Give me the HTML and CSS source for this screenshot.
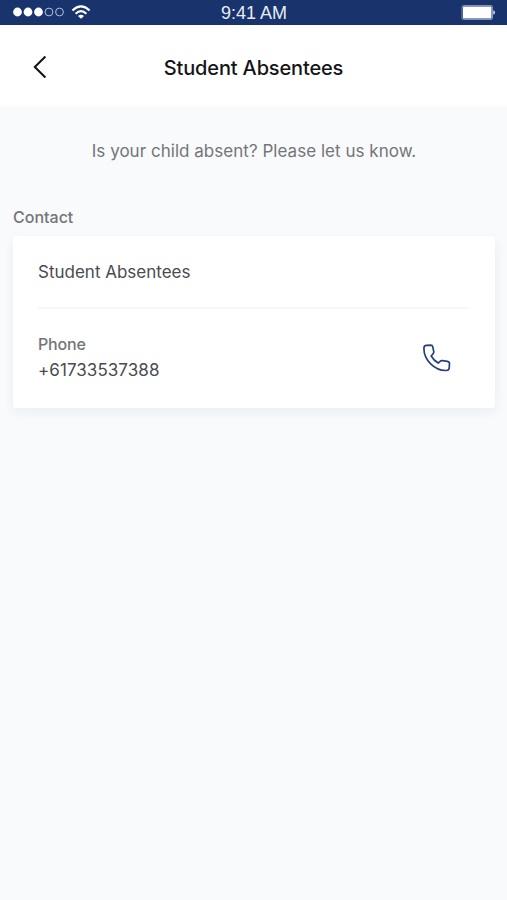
FILE: index.html
```html
<!DOCTYPE html>
<html lang="en">
<head>
<meta charset="utf-8">
<title>Student Absentees</title>
<link rel="stylesheet" href="styles.css">
</head>
<body>
<div class="status">
  <div class="status-left">
    <svg class="signal" viewBox="0 0 52 10" aria-hidden="true">
      <g fill="#fff"><circle cx="4.5" cy="5" r="4.4"/><circle cx="15" cy="5" r="4.4"/><circle cx="25.5" cy="5" r="4.4"/></g>
      <g fill="none" stroke="#b4c0dc" stroke-width="1"><circle cx="36" cy="5" r="3.9"/><circle cx="46.5" cy="5" r="3.9"/></g>
    </svg>
    <svg class="wifi" viewBox="0 0 20 14" aria-hidden="true">
      <g fill="none" stroke="#fff" stroke-width="2.1"><path d="M1.4 5.4Q10-2.6 18.6 5.4"/><path d="M4.6 8.8Q10 3.6 15.4 8.8"/></g>
      <path d="M7 11Q10 8.4 13 11L10 13.8Z" fill="#fff"/>
    </svg>
  </div>
  <span class="time">9:41 AM</span>
  <svg class="battery" viewBox="0 0 34 15" aria-hidden="true">
    <rect x="1" y=".5" width="30.5" height="14" rx="1.5" fill="none" stroke="#8292ba"/>
    <rect x="2" y="1.5" width="28.5" height="12" rx=".5" fill="#fff"/>
    <path d="M32.3 5.2Q34 5.7 34 7.5T32.3 9.8Z" fill="#dce5f2"/>
  </svg>
</div>
<header class="header">
  <svg class="back" viewBox="0 0 14 24" aria-hidden="true"><path d="M12.4 1.5L1.8 12L12.4 22.5" fill="none" stroke="#111" stroke-width="2"/></svg>
  <h1 class="title">Student Absentees</h1>
</header>
<main class="main">
  <p class="intro">Is your child absent? Please let us know.</p>
  <h2 class="label">Contact</h2>
  <section class="card">
    <div class="name">Student Absentees</div>
    <div class="phone-row">
      <div>
        <div class="phone-label">Phone</div>
        <div class="phone-number">+61733537388</div>
      </div>
      <svg class="phone" viewBox="0 0 28 28" aria-hidden="true"><path d="M3.5 1.4L7.6 1.2Q9.4 1.2 9.8 2.9L10.7 7.4Q11 8.8 10 9.8L8.2 12Q10.8 16.6 15.2 19.1L17.1 17.4Q18.1 16.5 19.5 16.7L24.4 17.3Q26.5 17.7 26.5 19.6L26.2 24Q26 26.5 23.2 26.5C11.6 26.8.8 16 .9 4.3Q.9 1.6 3.5 1.4Z"/></svg>
    </div>
  </section>
</main>
</body>
</html>
```
FILE: styles.css
```css
* { box-sizing: border-box; }
body {
  margin: 0;
  min-height: 900px;
  background: #f8fafc;
  font-family: Inter, "Liberation Sans", sans-serif;
}
h1, h2, p { margin: 0; }
.status {
  display: grid;
  grid-template-columns: 1fr auto 1fr;
  align-items: center;
  height: 25px;
  padding: 0 12px 0 13px;
  background: #19336d;
}
.status-left { display: flex; align-items: center; gap: 6px; padding-bottom: 2px; }
.signal { width: 52px; height: 10px; }
.wifi { width: 20px; height: 14px; }
.time {
  font: 18px/25px "Liberation Sans", sans-serif;
  letter-spacing: 0;
  color: #e6ebf5;
  padding-top: 1px;
}
.battery { width: 34px; height: 15px; justify-self: end; margin-bottom: 1px; }
.header {
  display: grid;
  grid-template-columns: 1fr auto 1fr;
  align-items: center;
  height: 81px;
  padding: 3px 33px 0;
  background: #fff;
}
.back { width: 14px; height: 24px; }
.title {
  font-size: 20px;
  line-height: 28px;
  font-weight: 500;
  letter-spacing: -0.15px;
  padding-top: 1px;
  color: #151518;
}
.main { padding: 33px 12px 0 13px; }
.intro {
  font-size: 17px;
  line-height: 25px;
  letter-spacing: 0.03px;
  text-align: center;
  color: #747579;
}
.label {
  margin-top: 42px;
  font-size: 16px;
  line-height: 22px;
  font-weight: 500;
  color: #737579;
}
.card {
  margin-top: 8px;
  height: 172px;
  padding: 0 25px;
  background: #fff;
  border-radius: 3px;
  box-shadow: 0 4px 12px rgba(30, 45, 60, 0.06);
}
.name {
  height: 73px;
  padding-top: 24px;
  font-size: 17px;
  line-height: 24px;
  color: #4a4b4f;
  border-bottom: 2px solid #f7f8f9;
}
.phone-row {
  display: flex;
  justify-content: space-between;
  padding: 23px 19px 0 0;
}
.phone-label {
  font-size: 16px;
  line-height: 24px;
  font-weight: 500;
  letter-spacing: -0.15px;
  color: #737477;
}
.phone-number { font-size: 17px; line-height: 28px; letter-spacing: 0.06px; color: #4a4b4f; }
.phone {
  width: 28px;
  height: 28px;
  margin-top: 12px;
  fill: none;
  stroke: #263f7c;
  stroke-width: 1.7;
  stroke-linejoin: round;
}
```
